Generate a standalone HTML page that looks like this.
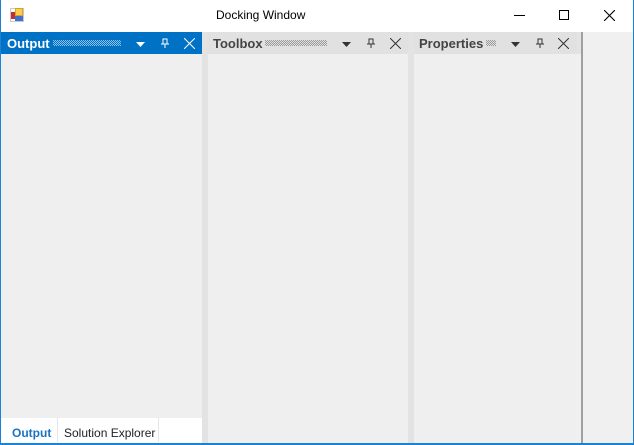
<!DOCTYPE html>
<html><head><meta charset="utf-8"><style>
*{margin:0;padding:0;box-sizing:border-box}
body{width:634px;height:445px;overflow:hidden;background:#fff;font-family:"Liberation Sans",sans-serif;position:relative}
.abs{position:absolute}
.hdr{position:absolute;top:32px;height:22px;background:#e1e1e1}
.t{position:absolute;top:4px;font-weight:bold;font-size:13px;color:#444}
.dots{position:absolute;top:8px;height:6px}
</style></head><body>
<svg width="0" height="0" style="position:absolute"><defs>
<pattern id="pd" width="2" height="2" patternUnits="userSpaceOnUse"><rect x="0" y="0" width="1" height="1" fill="#999"/><rect x="1" y="1" width="1" height="1" fill="#999"/></pattern>
<pattern id="pw" width="2" height="2" patternUnits="userSpaceOnUse"><rect x="0" y="0" width="1" height="1" fill="#8fc0ea"/><rect x="1" y="1" width="1" height="1" fill="#8fc0ea"/></pattern>
</defs></svg>
<div class="abs" style="left:0;top:0;width:1px;height:445px;background:#1883d7"></div>
<div class="abs" style="right:0;top:0;width:1px;height:445px;background:#1883d7"></div>
<div class="abs" style="left:0;top:443px;width:634px;height:2px;background:#1883d7"></div>
<svg class="abs" style="left:10px;top:8px" width="14" height="14" viewBox="0 0 14 14">
<rect x="0" y="0" width="14" height="14" fill="#c8c8c8"/>
<rect x="1" y="1" width="12" height="12" fill="#fff"/>
<rect x="1" y="4" width="4" height="7" fill="#c03030"/>
<rect x="5" y="0" width="8" height="8" fill="#e0a020"/><rect x="6" y="1" width="6" height="6" fill="#f8d050"/>
<rect x="5" y="8" width="8" height="5" fill="#4070d0"/>
</svg>
<div class="abs" style="left:216px;top:8px;font-size:12px;color:#000">Docking Window</div>
<div class="abs" style="left:514px;top:15px;width:11px;height:1px;background:#000"></div>
<div class="abs" style="left:559px;top:10px;width:10px;height:10px;border:1px solid #000"></div>
<svg class="abs" style="left:604px;top:10px" width="11" height="11"><path d="M0 0L11 11M11 0L0 11" stroke="#000" stroke-width="1.1"/></svg>
<div class="abs" style="left:1px;top:32px;width:632px;height:411px;background:#e3e3e3"></div>
<div class="abs" style="left:582px;top:32px;width:51px;height:411px;background:#f0f0f0"></div>
<div class="abs" style="left:577px;top:54px;width:5px;height:389px;background:#f0f0f0"></div>
<div class="abs" style="left:581px;top:32px;width:2px;height:411px;background:#a0a0a0"></div>
<div class="abs" style="left:1px;top:54px;width:201px;height:364px;background:#efefef"></div>
<div class="hdr" style="left:1px;width:201px;background:#0072c6">
<div class="t" style="left:6px;color:#fff">Output</div>
<svg class="dots" style="left:52px" width="68" height="6"><rect width="68" height="6" fill="url(#pw)"/></svg>
<svg class="abs" style="left:135px;top:10px" width="10" height="5"><path d="M0 0H9L4.5 5Z" fill="#fff"/></svg>
<svg class="abs" style="left:159px;top:6px" width="10" height="10"><path d="M3 1H7V6H3ZM1 6H9M5 6V10" stroke="#fff" fill="none"/></svg>
<svg class="abs" style="left:183px;top:6px" width="11" height="11"><path d="M0 0L11 11M11 0L0 11" stroke="#fff"/></svg>
</div>
<div class="abs" style="left:1px;top:418px;width:201px;height:25px;background:#fff"></div>
<div class="abs" style="left:57px;top:418px;width:1px;height:24px;background:#e6e6e6"></div>
<div class="abs" style="left:158px;top:418px;width:1px;height:24px;background:#e6e6e6"></div>
<div class="abs" style="left:12px;top:426px;font-size:12px;font-weight:bold;color:#1b73c4">Output</div>
<div class="abs" style="left:64px;top:426px;font-size:12px;color:#222">Solution Explorer</div>
<div class="abs" style="left:208px;top:54px;width:200px;height:389px;background:#efefef"></div>
<div class="hdr" style="left:207px;width:201px">
<div class="t" style="left:6px">Toolbox</div>
<svg class="dots" style="left:58px" width="62" height="6"><rect width="62" height="6" fill="url(#pd)"/></svg>
<svg class="abs" style="left:135px;top:10px" width="10" height="5"><path d="M0 0H9L4.5 5Z" fill="#333"/></svg>
<svg class="abs" style="left:159px;top:6px" width="10" height="10"><path d="M3 1H7V6H3ZM1 6H9M5 6V10" stroke="#333" fill="none"/></svg>
<svg class="abs" style="left:183px;top:6px" width="11" height="11"><path d="M0 0L11 11M11 0L0 11" stroke="#333"/></svg>
</div>
<div class="abs" style="left:414px;top:54px;width:163px;height:389px;background:#efefef"></div>
<div class="hdr" style="left:414px;width:163px">
<div class="t" style="left:5px">Properties</div>
<svg class="dots" style="left:72px" width="10" height="6"><rect width="10" height="6" fill="url(#pd)"/></svg>
<svg class="abs" style="left:97px;top:10px" width="10" height="5"><path d="M0 0H9L4.5 5Z" fill="#333"/></svg>
<svg class="abs" style="left:121px;top:6px" width="10" height="10"><path d="M3 1H7V6H3ZM1 6H9M5 6V10" stroke="#333" fill="none"/></svg>
<svg class="abs" style="left:144px;top:6px" width="11" height="11"><path d="M0 0L11 11M11 0L0 11" stroke="#333"/></svg>
</div>
</body></html>
